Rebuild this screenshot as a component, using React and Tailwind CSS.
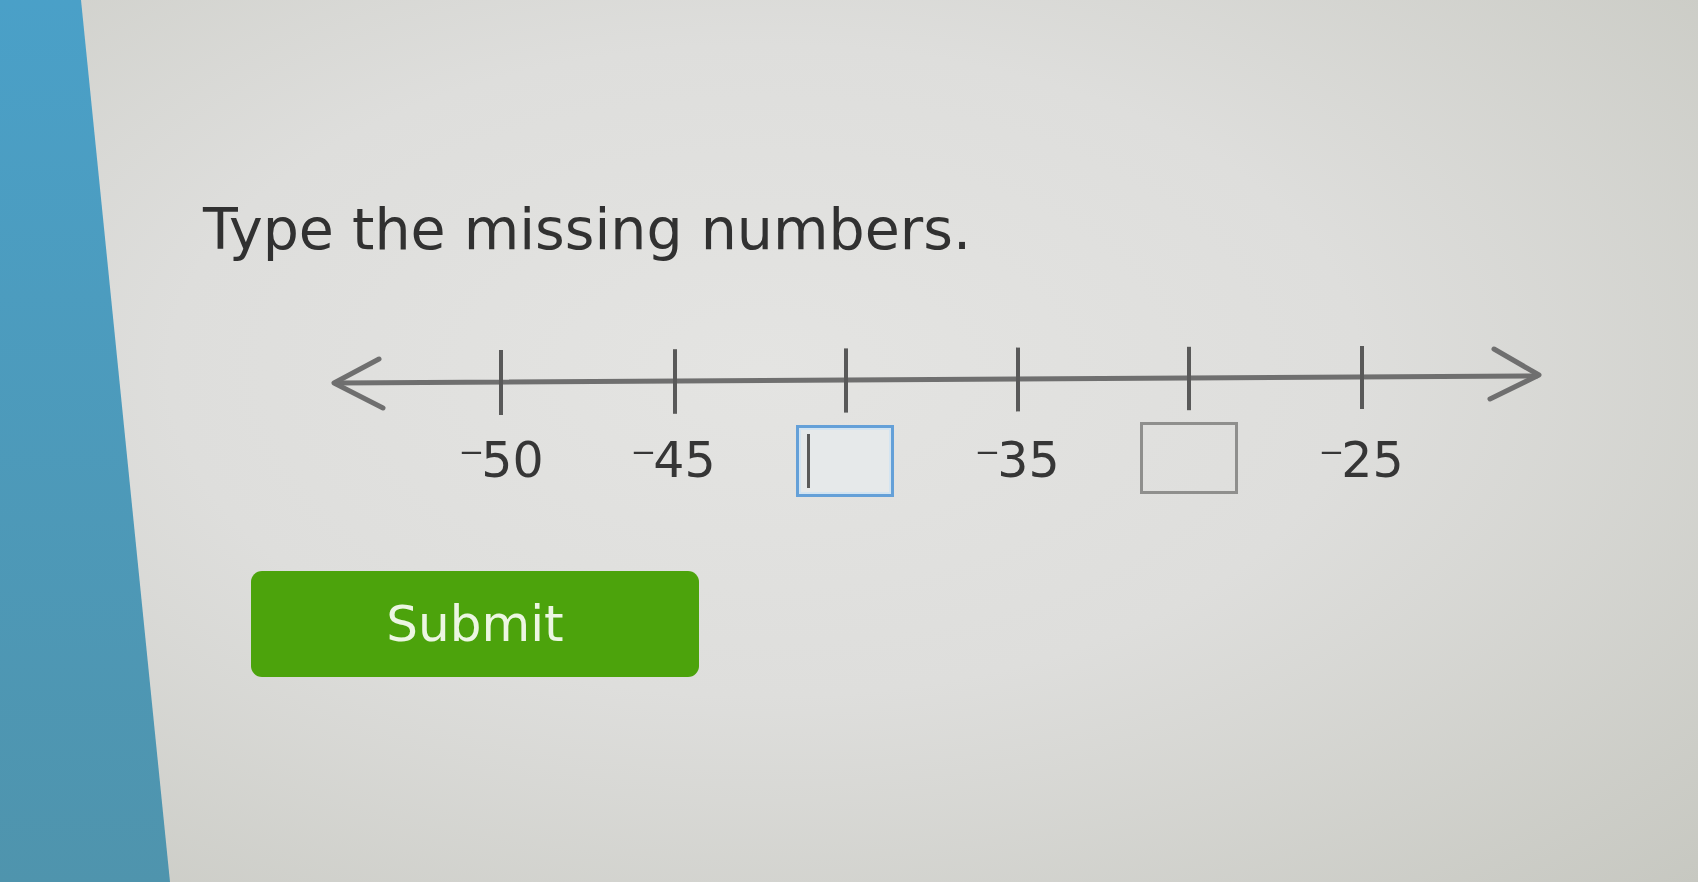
const font = { fontFamily: '"DejaVu Sans", Verdana, sans-serif' }

const ticks = [176, 350, 521, 693, 864, 1037]

function NumberLine() {
  return (
    <svg width="1225" height="80" viewBox="0 0 1225 80" className="block">
      <line x1="12" y1="43" x2="1212" y2="36" stroke="#6f6f6f" strokeWidth="5" strokeLinecap="round" />
      <polyline points="54,19 9,43 58,68" fill="none" stroke="#6f6f6f" strokeWidth="5" strokeLinecap="round" strokeLinejoin="round" />
      <polyline points="1169,9 1214,35 1165,59" fill="none" stroke="#6f6f6f" strokeWidth="5" strokeLinecap="round" strokeLinejoin="round" />
      {ticks.map((x, i) => (
        <line key={x} x1={x} y1={10 - i * 0.8} x2={x} y2={75 - i * 1.2} stroke="#595959" strokeWidth="4" />
      ))}
    </svg>
  )
}

function Label({ value }) {
  return (
    <div className="mt-[16px] text-center text-[49px] leading-none text-[#363636]">
      <span className="mr-[-3px]">{"\u207B"}</span>
      {value}
    </div>
  )
}

function Blank({ focused, raise }) {
  return (
    <div className="flex justify-center">
      <div
        className={`flex h-[72px] w-[98px] items-center pl-[8px] ${raise ? "mt-[2px]" : "mt-[5px]"} ${
          focused
            ? "border-[3px] border-[#64a0d8] bg-[#e6e9ea] shadow-[inset_0_0_0_2px_#d3e4f1]"
            : "border-[3px] border-[#8f8f8d] bg-transparent"
        }`}
      >
        {focused && <span className="block h-[54px] w-[3px] bg-[#5a5a5a]" />}
      </div>
    </div>
  )
}

export default function App() {
  return (
    <div
      style={font}
      className="flex h-[882px] w-full overflow-hidden bg-[radial-gradient(ellipse_at_45%_42%,#e4e4e2_0%,#dededc_45%,#c7c8c1_100%)]"
    >
      <aside className="h-full w-[170px] shrink-0 bg-gradient-to-b from-[#4aa0c8] to-[#4f94ad] [clip-path:polygon(0_0,81px_0,170px_100%,0_100%)]" />

      <main className="flex flex-1 flex-col">
        <h1 className="ml-[33px] mt-[201px] text-[57px] font-normal leading-none text-[#313131]">
          Type the missing numbers.
        </h1>

        <section className="ml-[155px] mt-[82px] w-[1225px]">
          <NumberLine />
          <div className="ml-[90px] grid w-[1032px] grid-cols-6 items-start">
            <Label value="50" />
            <Label value="45" />
            <Blank focused />
            <Label value="35" />
            <Blank raise />
            <Label value="25" />
          </div>
        </section>

        <button
          type="button"
          className="ml-[81px] mt-[74px] flex h-[106px] w-[448px] items-center justify-center rounded-[11px] bg-[#4ca30c] text-[50px] leading-none text-[#ecf6e2]"
        >
          Submit
        </button>
      </main>
    </div>
  )
}
